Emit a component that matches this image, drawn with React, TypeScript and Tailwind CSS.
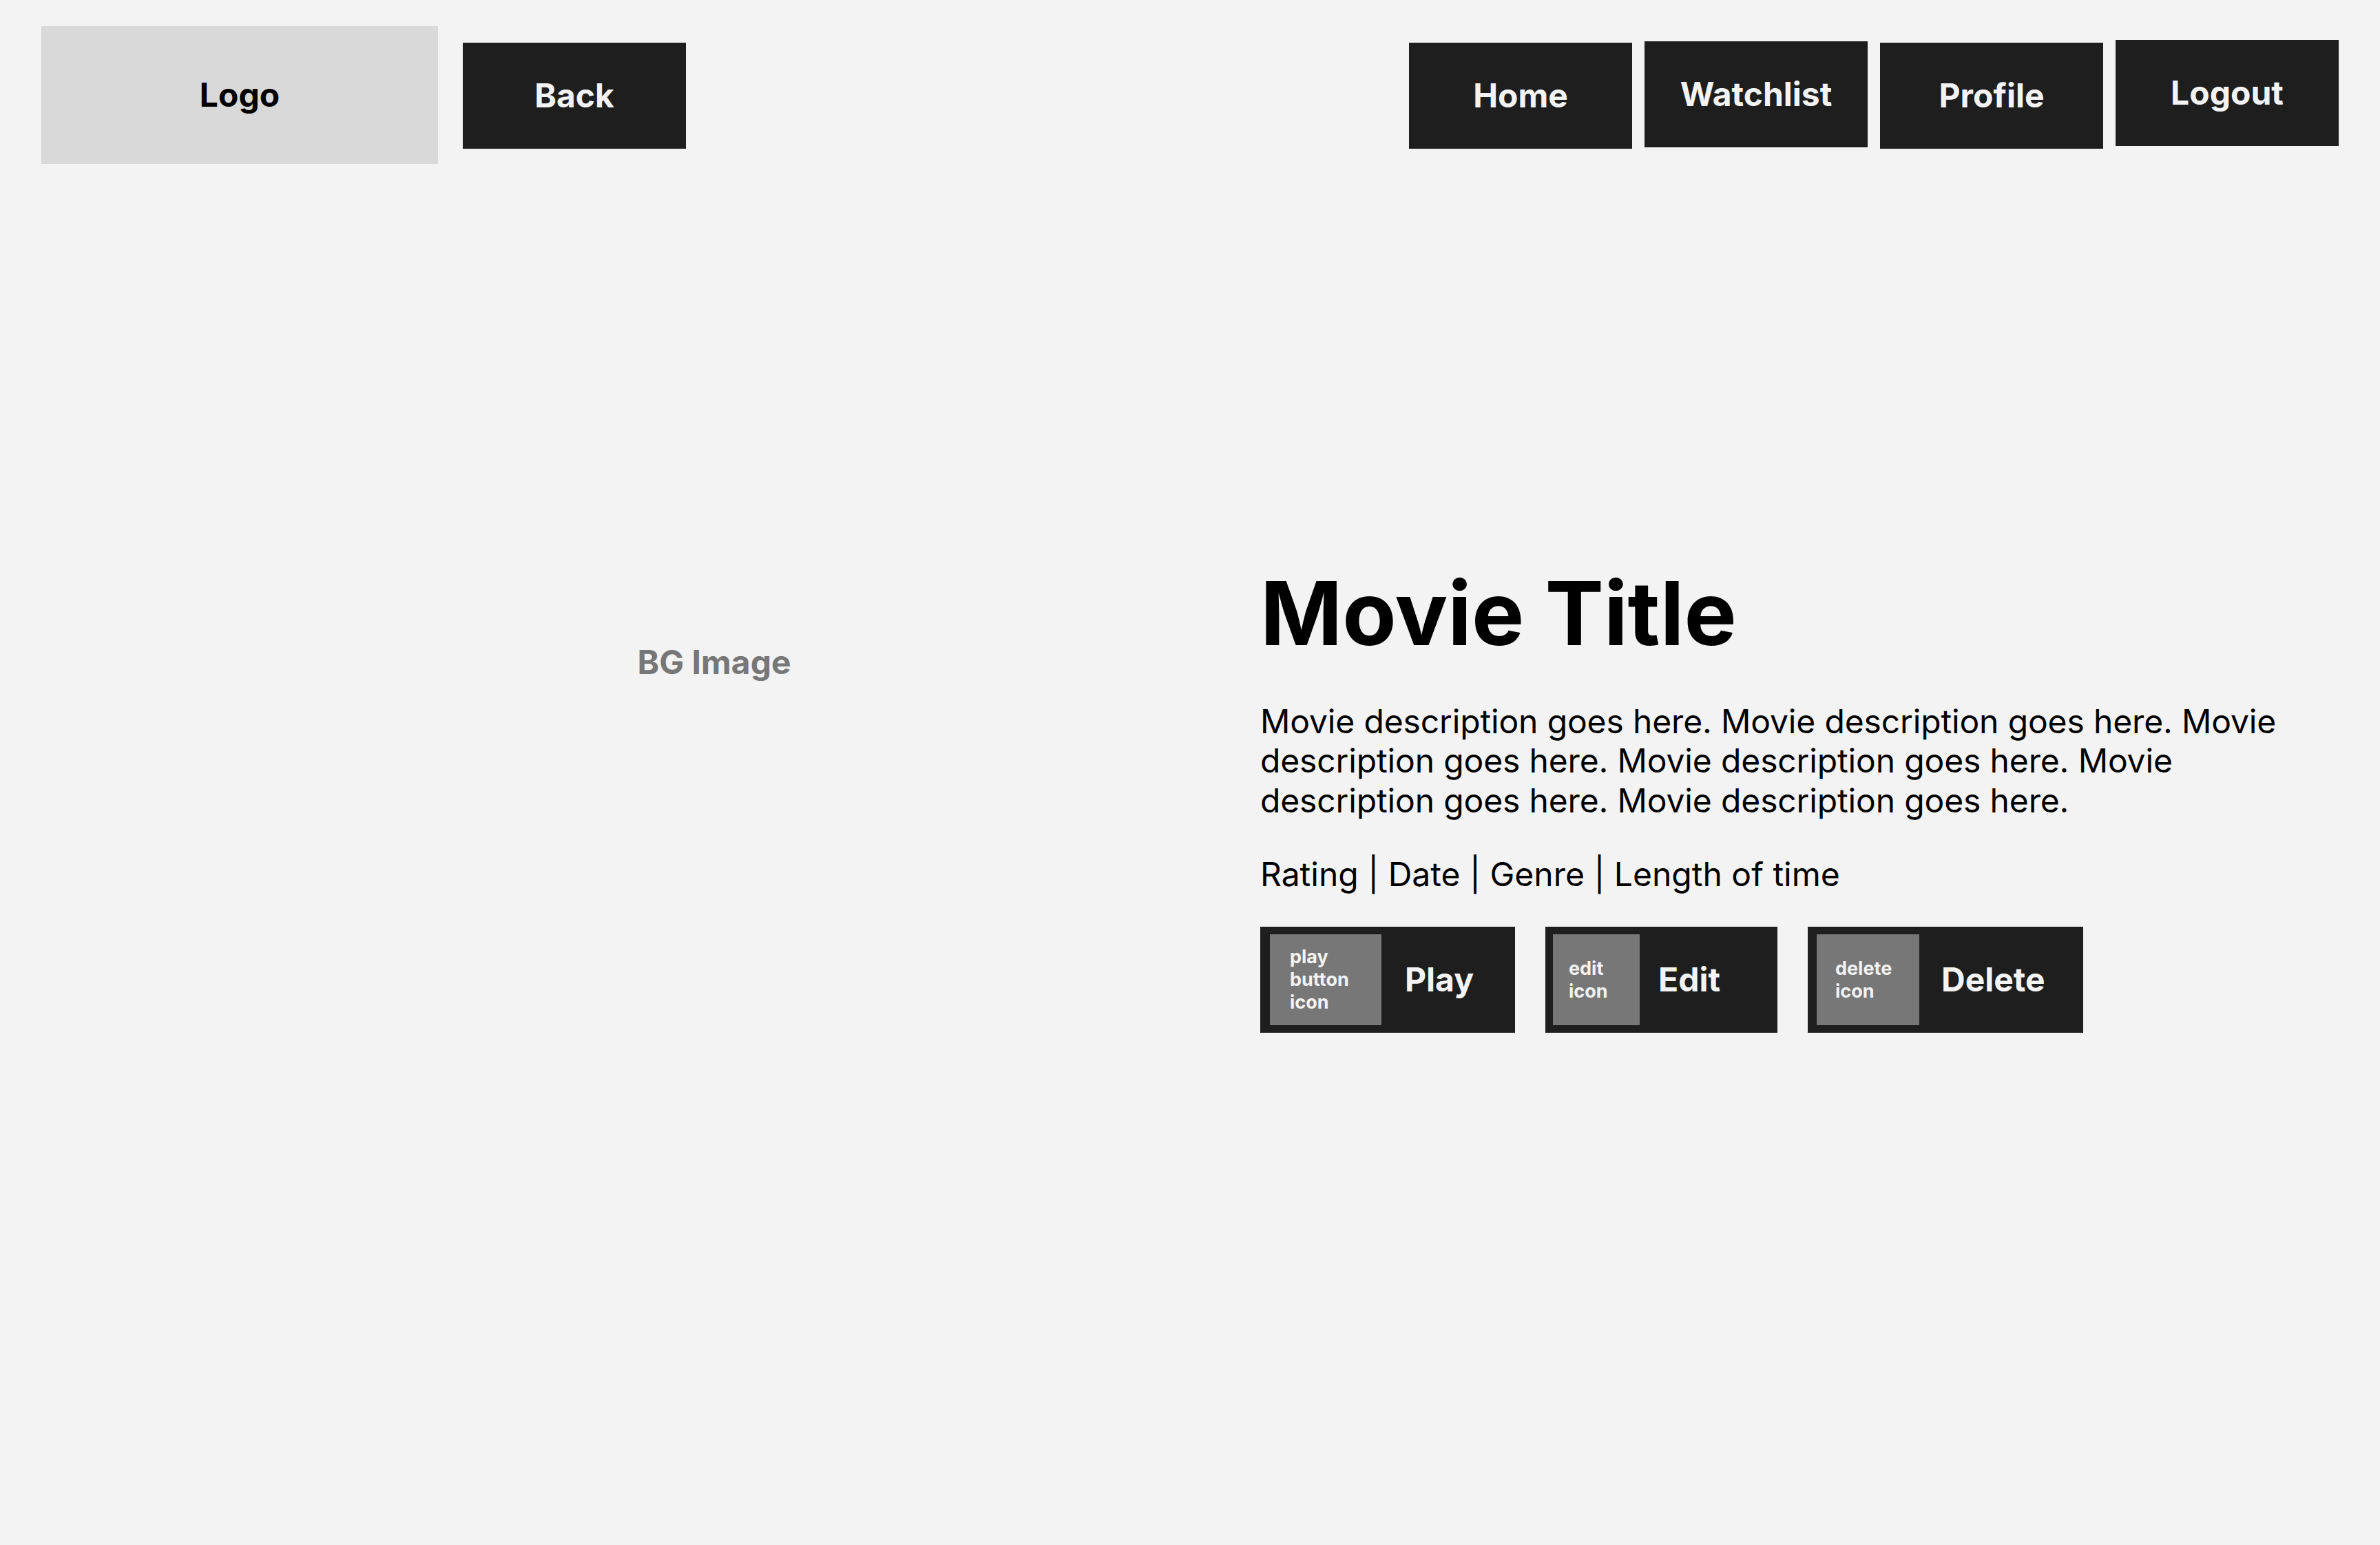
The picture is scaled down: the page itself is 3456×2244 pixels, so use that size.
import type { FC } from "react"

type NavItem = {
  label: string
  offset: string
}

const navItems: NavItem[] = [
  { label: "Home", offset: "mt-[24px]" },
  { label: "Watchlist", offset: "mt-[22px]" },
  { label: "Profile", offset: "mt-[24px]" },
  { label: "Logout", offset: "mt-[20px]" },
]

type ActionProps = {
  iconText: string[]
  label: string
  width: string
  iconWidth: string
  padLeft: string
  iconPad: string
  gap: string
}

const ActionButton: FC<ActionProps> = (props) => {
  return (
    <button
      className={`flex h-[154px] items-center bg-[#1e1e1e] ${props.width} ${props.padLeft} ${props.gap}`}
    >
      <div
        className={`flex h-[132px] flex-col justify-center bg-[#777777] ${props.iconWidth} ${props.iconPad}`}
      >
        {props.iconText.map((line) => (
          <span key={line} className="text-left text-[27px] font-bold leading-[33px] text-[#f3f3f3]">
            {line}
          </span>
        ))}
      </div>
      <span className="text-[48px] font-bold leading-[1.2] text-[#f3f3f3]">{props.label}</span>
    </button>
  )
}

export default function App() {
  return (
    <div className="min-h-screen w-full bg-[#f3f3f3] font-['Inter',sans-serif] text-black">
      {/* ヘッダー */}
      <header className="flex items-start px-[60px] pt-[38px]">
        <div className="flex h-[200px] w-[576px] items-center justify-center bg-[#d9d9d9]">
          <span className="text-[48px] font-bold leading-[1.2] text-black">Logo</span>
        </div>
        <button className="ml-[36px] mt-[24px] flex h-[154px] w-[324px] items-center justify-center bg-[#1e1e1e]">
          <span className="text-[48px] font-bold leading-[1.2] text-[#f3f3f3]">Back</span>
        </button>

        <nav className="ml-auto flex items-start gap-[18px]">
          {navItems.map((item) => (
            <button
              key={item.label}
              className={`flex h-[154px] w-[324px] items-center justify-center bg-[#1e1e1e] ${item.offset}`}
            >
              <span className="text-[48px] font-bold leading-[1.2] text-[#f3f3f3]">{item.label}</span>
            </button>
          ))}
        </nav>
      </header>

      {/* メイン */}
      <main className="flex">
        <div className="flex w-[1830px] justify-center pl-[244px] pt-[695px]">
          <span className="text-[48px] font-bold leading-[1.2] text-[#777777]">BG Image</span>
        </div>

        <section className="flex w-[1566px] flex-col pt-[576px]">
          <h1 className="text-[128px] font-bold leading-[1.2]">Movie Title</h1>
          <p className="mt-[51px] text-[48px] leading-[1.2] tracking-[-0.003em]">
            Movie description goes here. Movie description goes here. Movie description goes here. Movie description
            goes here. Movie description goes here. Movie description goes here.
          </p>
          <p className="mt-[50px] text-[48px] leading-[1.2]">Rating | Date | Genre | Length of time</p>

          <div className="mt-[47px] flex items-center gap-[44px]">
            <ActionButton
              iconText={["play", "button", "icon"]}
              label="Play"
              width="w-[370px]"
              iconWidth="w-[162px]"
              padLeft="pl-[14px]"
              iconPad="pl-[29px]"
              gap="gap-[34px]"
            />
            <ActionButton
              iconText={["edit", "icon"]}
              label="Edit"
              width="w-[337px]"
              iconWidth="w-[126px]"
              padLeft="pl-[11px]"
              iconPad="pl-[23px]"
              gap="gap-[27px]"
            />
            <ActionButton
              iconText={["delete", "icon"]}
              label="Delete"
              width="w-[400px]"
              iconWidth="w-[149px]"
              padLeft="pl-[13px]"
              iconPad="pl-[27px]"
              gap="gap-[32px]"
            />
          </div>
        </section>
      </main>
    </div>
  )
}
